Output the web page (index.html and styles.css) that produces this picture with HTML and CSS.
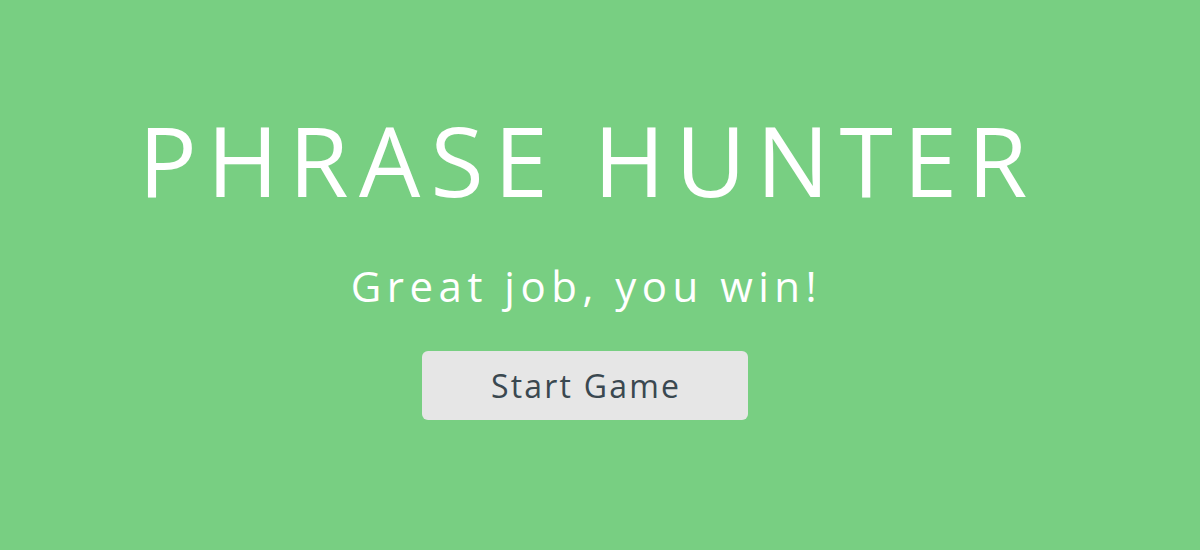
FILE: index.html
```html
<!DOCTYPE html>
<html lang="en">
<head>
<meta charset="utf-8">
<title>Phrase Hunter</title>
<link rel="stylesheet" href="styles.css">
</head>
<body>
<div class="overlay">
  <h2 class="title">PHRASE HUNTER</h2>
  <h1 class="game-over-message">Great job, you win!</h1>
  <button class="btn-reset">Start Game</button>
</div>
</body>
</html>
```
FILE: styles.css
```css
html, body {
  margin: 0;
  padding: 0;
}
body {
  background: #78cf82;
  font-family: "Open Sans", "DejaVu Sans", sans-serif;
  height: 550px;
  overflow: hidden;
}
.overlay {
  display: flex;
  flex-direction: column;
  align-items: center;
  padding-top: 111px;
  padding-right: 30px;
}
.title {
  margin: 0 0 0 6px;
  font-size: 97px;
  line-height: 97px;
  font-weight: 400;
  color: #ffffff;
  letter-spacing: 10.25px;
}
.game-over-message {
  margin: 57px 0 0 3px;
  font-size: 42px;
  line-height: 42px;
  font-weight: 400;
  color: #ffffff;
  letter-spacing: 5.5px;
}
.btn-reset {
  margin-top: 44px;
  width: 326px;
  height: 69px;
  border: none;
  border-radius: 6px;
  background: #e6e6e6;
  color: #3a4850;
  font-family: inherit;
  font-size: 32px;
  letter-spacing: 2.2px;
  padding: 0 0 0 2.2px;
}
```
